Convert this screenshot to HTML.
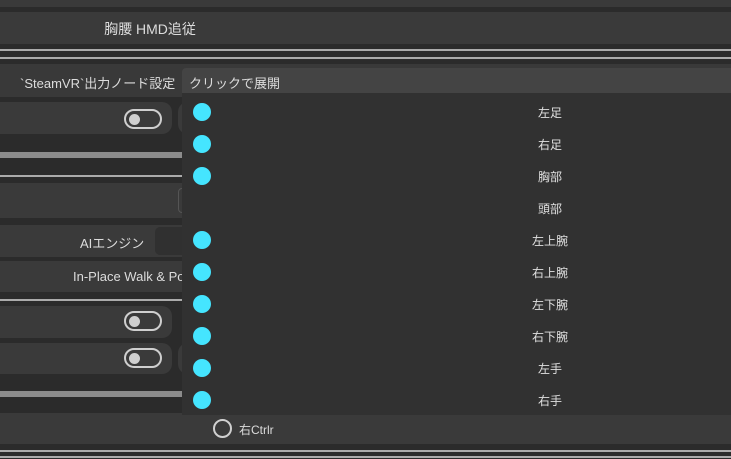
<!DOCTYPE html>
<html><head><meta charset="utf-8"><style>
*{margin:0;padding:0;box-sizing:border-box}
body{width:731px;height:459px;overflow:hidden;background:#2b2b2b;position:relative;font-family:"Liberation Sans","Noto Sans CJK JP",sans-serif;color:#dcdcdc;font-size:13px}
.a{position:absolute}
.row{position:absolute;left:0;background:#3a3a3a}
.line{position:absolute;left:0;width:731px;height:2px;background:#ababab}
.tog{position:absolute;width:38px;height:20px;border:2px solid #cfcfcf;border-radius:10px}
.tog::after{content:"";position:absolute;left:3px;top:3px;width:11px;height:11px;border-radius:50%;background:#cfcfcf}
.dot{position:absolute;left:193px;width:18px;height:18px;border-radius:50%;background:#45e5ff}
.lab{position:absolute;left:500px;width:100px;text-align:center;font-size:12px;color:#e0e0e0}
</style></head><body>
<div class="row" style="top:0;height:7px;width:731px"></div>
<div class="row" style="top:12px;height:32px;width:731px"></div>
<div class="a" style="top:19px;left:0;width:300px;text-align:center;font-size:14px">胸腰 HMD追従</div>
<div class="line" style="top:49px"></div>
<div class="line" style="top:57px"></div>
<div class="row" style="top:64px;height:33px;width:731px;background:#393939"></div>
<div class="a" style="top:73px;left:20px;font-size:13px">`SteamVR`出力ノード設定</div>
<div class="a" style="top:68px;left:182px;width:549px;height:25px;background:#444;border-radius:4px 0 0 0"></div>
<div class="a" style="top:73px;left:189px;font-size:13px">クリックで展開</div>

<div class="row" style="top:102px;height:32px;width:172px;border-radius:0 10px 10px 0"></div>
<div class="tog" style="left:124px;top:109px"></div>
<div class="row" style="top:102px;left:178px;height:32px;width:20px;border-radius:10px 0 0 10px"></div>
<div class="a" style="top:152px;left:0;width:182px;height:6px;background:#8c8c8c"></div>
<div class="line" style="top:175px;width:182px"></div>
<div class="row" style="top:183px;height:35px;width:182px"></div>
<div class="a" style="top:188px;left:178px;width:10px;height:25px;border:1px solid #555;border-radius:4px 0 0 4px"></div>
<div class="row" style="top:225px;height:32px;width:182px"></div>
<div class="a" style="top:233px;left:80px;font-size:13px">AIエンジン</div>
<div class="a" style="top:227px;left:155px;width:30px;height:28px;background:#303030;border-radius:5px 0 0 5px"></div>
<div class="row" style="top:261px;height:31px;width:182px"></div>
<div class="a" style="top:269px;left:73px;font-size:13px;white-space:nowrap;width:109px;overflow:hidden">In-Place Walk &amp; Po</div>
<div class="line" style="top:299px;width:182px"></div>
<div class="row" style="top:306px;height:32px;width:172px;border-radius:0 10px 10px 0"></div>
<div class="tog" style="left:124px;top:311px"></div>
<div class="row" style="top:343px;height:31px;width:172px;border-radius:0 10px 10px 0"></div>
<div class="tog" style="left:124px;top:348px"></div>
<div class="row" style="top:343px;left:178px;height:31px;width:20px;border-radius:10px 0 0 10px"></div>
<div class="a" style="top:391px;left:0;width:182px;height:6px;background:#8c8c8c"></div>
<div class="row" style="top:413px;height:31px;width:731px"></div>
<div class="a" style="top:419px;left:213px;width:19px;height:19px;border:2px solid #d0d0d0;border-radius:50%"></div>
<div class="a" style="top:421px;left:239px;font-size:12px">右Ctrlr</div>
<div class="line" style="top:450px"></div>
<div class="line" style="top:456px"></div>

<div class="a" style="top:93px;left:182px;width:549px;height:322px;background:#313131"></div>
<div class="dot" style="top:103px"></div><div class="lab" style="top:104px">左足</div>
<div class="dot" style="top:135px"></div><div class="lab" style="top:136px">右足</div>
<div class="dot" style="top:167px"></div><div class="lab" style="top:168px">胸部</div>
<div class="lab" style="top:200px">頭部</div>
<div class="dot" style="top:231px"></div><div class="lab" style="top:232px">左上腕</div>
<div class="dot" style="top:263px"></div><div class="lab" style="top:264px">右上腕</div>
<div class="dot" style="top:295px"></div><div class="lab" style="top:296px">左下腕</div>
<div class="dot" style="top:327px"></div><div class="lab" style="top:328px">右下腕</div>
<div class="dot" style="top:359px"></div><div class="lab" style="top:360px">左手</div>
<div class="dot" style="top:391px"></div><div class="lab" style="top:392px">右手</div>
</body></html>
